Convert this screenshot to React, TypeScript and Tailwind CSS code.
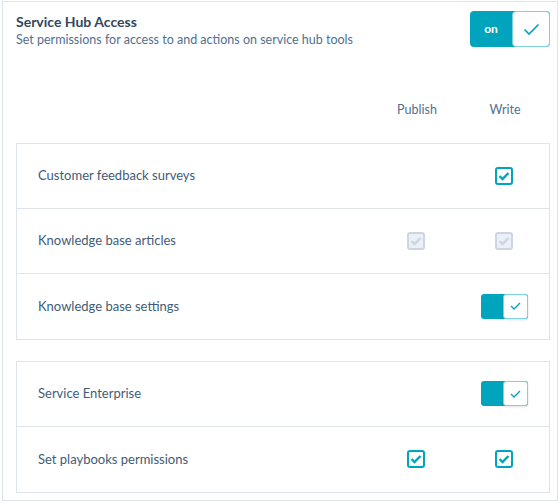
import React from "react";

const Check = ({ dis }: { dis?: boolean }) => (
  <div className={`w-[18px] h-[18px] rounded-[3px] border-2 flex items-center justify-center ${dis ? "border-[#cbd6e2] bg-[#eaf0f6]" : "border-[#00a4bd] bg-white"}`}>
    <svg width="12" height="10" viewBox="0 0 12 10"><path d="M1.5 5 L4.5 8 L10.5 2" fill="none" stroke={dis ? "#cbd6e2" : "#00a4bd"} strokeWidth="2.4" /></svg>
  </div>
);

const Toggle = () => (
  <div className="w-[47px] h-[25px] rounded-[3px] bg-[#00a4bd] relative">
    <div className="absolute right-0 top-0 w-[25px] h-[25px] bg-white border border-[#7fd1de] rounded-[3px] shadow-sm flex items-center justify-center">
      <svg width="11" height="8" viewBox="0 0 11 8"><path d="M1 4 L4 7 L10 1" fill="none" stroke="#00a4bd" strokeWidth="1.3" /></svg>
    </div>
  </div>
);

const Row = ({ label, pub, write, last }: { label: string; pub?: React.ReactNode; write?: React.ReactNode; last?: boolean }) => (
  <div className={`h-[65px] flex items-center pl-[21px] ${last ? "" : "border-b border-[#dfe3eb]"}`}>
    <div className="flex-1 text-[13px] text-[#425b76]">{label}</div>
    <div className="w-[86px] flex justify-center">{pub}</div>
    <div className="w-[90px] flex justify-center">{write}</div>
  </div>
);

export default function App() {
  return (
    <div className="w-[560px] h-[504px] bg-white pt-px px-[2px]" style={{ fontFamily: "Lato, 'Liberation Sans', sans-serif" }}>
      <div className="h-[500px] border border-[#dfe3eb] pl-[13px] pr-[7px] pt-[9px]">
        <div className="flex justify-between">
          <div className="pt-[2px]">
            <div className="text-[14px] font-bold text-[#33475b] leading-[17px]">Service Hub Access</div>
            <div className="text-[12.5px] text-[#516f90] leading-[17px] mt-[1px]">Set permissions for access to and actions on service hub tools</div>
          </div>
          <div className="w-[80px] h-[36px] rounded-[4px] bg-[#00a4bd] flex relative">
            <div className="w-[42px] flex items-center justify-center text-white text-[12px] font-bold">on</div>
            <div className="flex-1 bg-white border border-[#7fd1de] rounded-[4px] flex items-center justify-center">
              <svg width="17" height="13" viewBox="0 0 17 13"><path d="M1.5 6.5 L6 11 L15.5 1.5" fill="none" stroke="#00a4bd" strokeWidth="1.6" /></svg>
            </div>
          </div>
        </div>
        <div className="flex justify-end mt-[53px] text-[12.5px] text-[#516f90]">
          <div className="w-[86px] text-center">Publish</div>
          <div className="w-[90px] text-center">Write</div>
        </div>
        <div className="mt-[23px] border border-[#dfe3eb]">
          <Row label="Customer feedback surveys" write={<Check />} />
          <Row label="Knowledge base articles" pub={<Check dis />} write={<Check dis />} />
          <Row label="Knowledge base settings" write={<Toggle />} last />
        </div>
        <div className="mt-[21px] border border-[#dfe3eb]">
          <Row label="Service Enterprise" write={<Toggle />} />
          <Row label="Set playbooks permissions" pub={<Check />} write={<Check />} last />
        </div>
      </div>
    </div>
  );
}
